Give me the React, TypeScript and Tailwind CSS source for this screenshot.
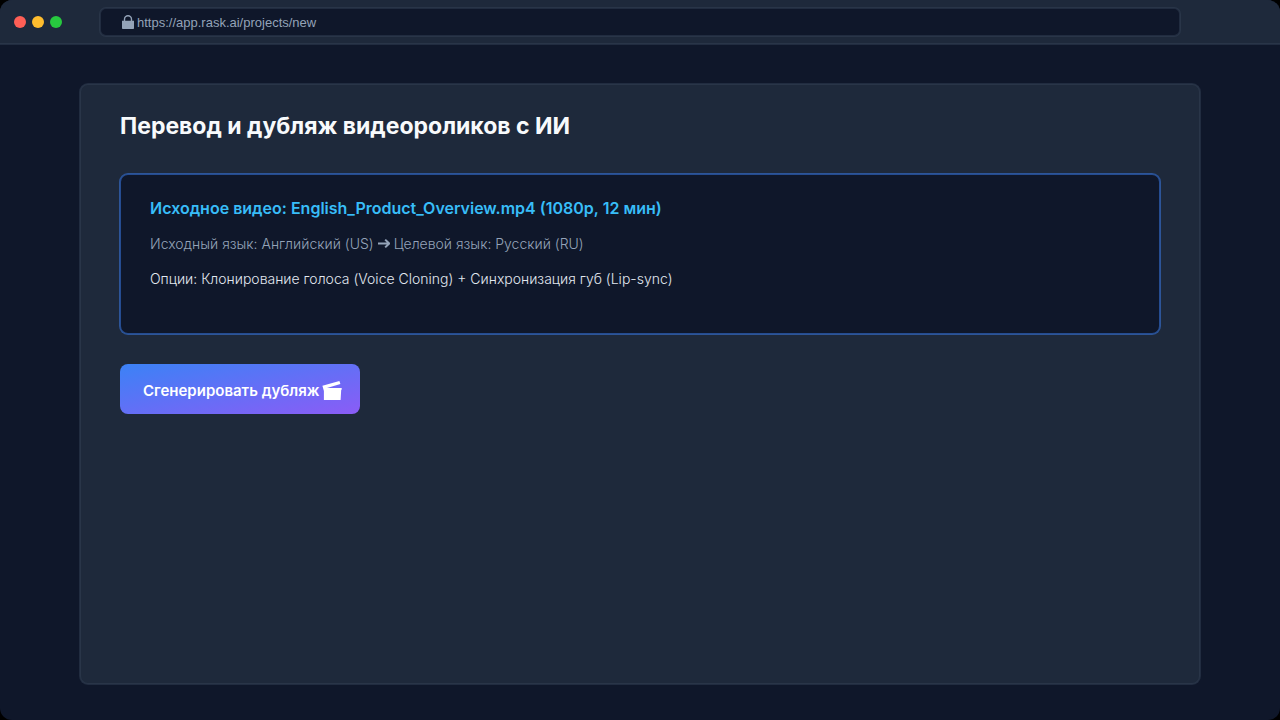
import React from 'react';

function LockIcon() {
  return (
    <svg className="h-4 w-3 shrink-0 text-[#94a3b8]" viewBox="0 0 12 16" aria-hidden="true">
      <path d="M2.5 6.5V4.2a3.5 3.5 0 0 1 7 0v2.3" fill="none" stroke="currentColor" strokeWidth="1.4" />
      <path d="M0 5.8h12v7.4a.8.8 0 0 1-.8.8H.8a.8.8 0 0 1-.8-.8z" fill="currentColor" />
    </svg>
  );
}

function ArrowIcon() {
  return (
    <svg className="h-3 w-3 shrink-0 text-[#94a3b8]" viewBox="0 0 12 12" aria-hidden="true">
      <path
        d="M0 5.5h11M7.2 1.6 11.2 5.5 7.2 9.4"
        fill="none"
        stroke="currentColor"
        strokeWidth="2"
        strokeLinejoin="round"
      />
    </svg>
  );
}

function ClapperIcon() {
  return (
    <svg className="h-5 w-5 shrink-0" viewBox="0 0 20 20" aria-hidden="true">
      <path
        d="M.4 4.8 17.4.1l1 2.9L5 7h14.7v1.8h-.5L18.6 19H1.9V10z"
        fill="currentColor"
      />
    </svg>
  );
}

function BrowserBar() {
  return (
    <header className="flex h-11 items-center border-b border-[#334155]/50 bg-[#1e293b] pl-3.5 pr-25 ring-1 ring-[#334155]/50">
      <div className="flex w-[86px] shrink-0 gap-1.5">
        <span className="size-3 rounded-full bg-[#ff5f56]" />
        <span className="size-3 rounded-full bg-[#ffbd2e]" />
        <span className="size-3 rounded-full bg-[#27c93f]" />
      </div>
      <div className="flex h-7 flex-1 items-center gap-[3px] rounded-md border border-[#334155]/50 bg-[#0f172a] pl-[21px] pt-0.5 font-['Liberation_Sans',sans-serif] text-[13px] text-[#94a3b8] ring-1 ring-[#334155]/50">
        <LockIcon />
        <span>https://app.rask.ai/projects/new</span>
      </div>
    </header>
  );
}

export default function App() {
  return (
    <div className="min-h-screen bg-black">
      <div className="flex min-h-screen flex-col overflow-hidden rounded-xl bg-[#0f172a] font-['Inter',sans-serif]">
        <BrowserBar />
        <main className="flex flex-1 flex-col px-20 pb-9 pt-10">
          <section className="flex-1 rounded-lg border border-[#334155]/50 bg-[#1e293b] px-[39px] pt-[25px] ring-1 ring-[#334155]/50">
            <h1 className="text-[23px] leading-8 font-bold text-[#f8fafc]">Перевод и дубляж видеороликов с ИИ</h1>
            <div className="mt-8 rounded-lg border border-[#3b82f6]/50 bg-[#0f172a] px-[29px] pb-11 pt-[21px] ring-1 ring-[#3b82f6]/50">
              <h2 className="text-base font-semibold text-[#38bdf8]">
                Исходное видео: English_Product_Overview.mp4 (1080p, 12 мин)
              </h2>
              <p className="mt-3.5 flex items-center gap-1 text-sm font-light text-[#94a3b8]">
                <span>Исходный язык: Английский (US)</span>
                <ArrowIcon />
                <span>Целевой язык: Русский (RU)</span>
              </p>
              <p className="mt-[15px] text-sm font-light text-[#e2e8f0]">
                Опции: Клонирование голоса (Voice Cloning) + Синхронизация губ (Lip-sync)
              </p>
            </div>
            <button
              type="button"
              className="mt-[30px] flex h-[50px] w-60 items-center gap-0.5 rounded-lg bg-linear-to-br/srgb from-[#3b82f6] to-[#8b5cf6] pl-[23px] pt-1 text-[15px] font-semibold text-white"
            >
              <span>Сгенерировать дубляж</span>
              <ClapperIcon />
            </button>
          </section>
        </main>
      </div>
    </div>
  );
}
